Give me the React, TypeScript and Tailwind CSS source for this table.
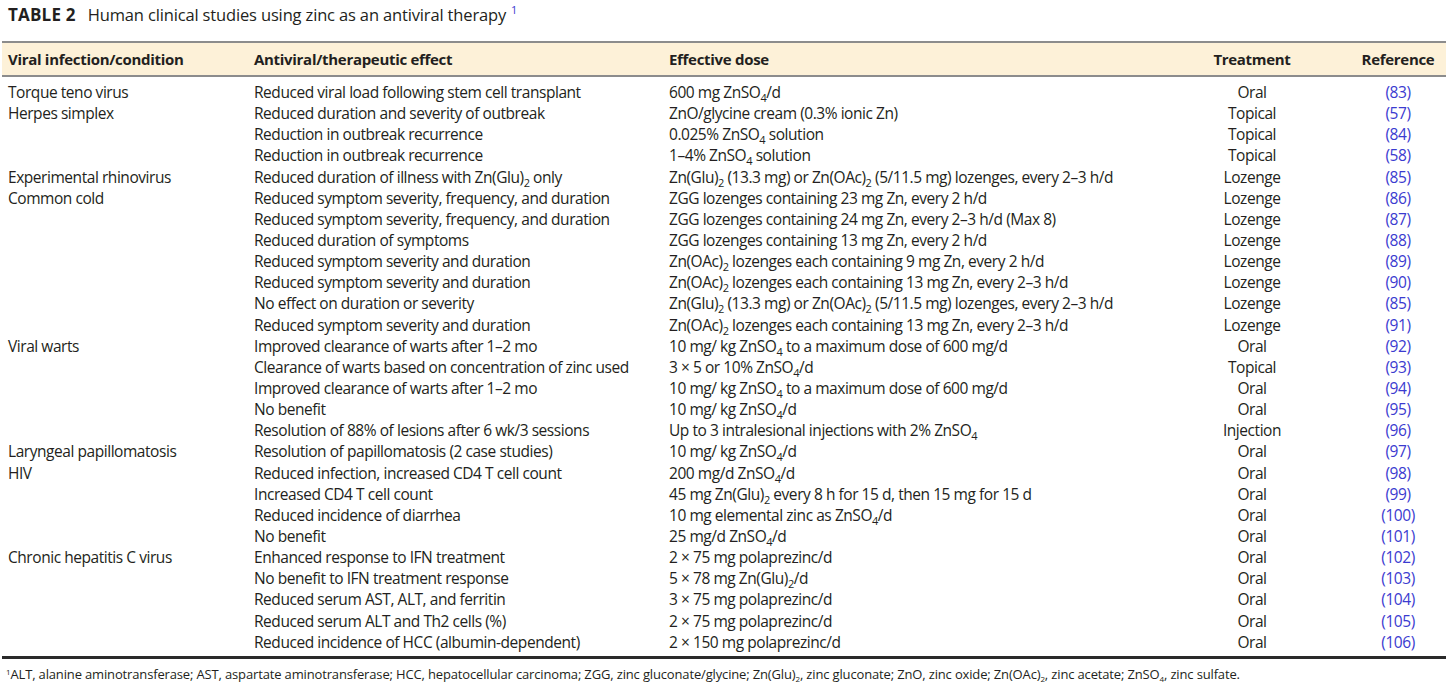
import React from "react";

type Row = { cond?: string; effect: React.ReactNode; dose: React.ReactNode; tx: string; ref: number };

const Sub = ({ children }: { children: React.ReactNode }) => (
  <span className="text-[11px] relative top-[4px] leading-none">{children}</span>
);

const ZnSO4 = () => (
  <>
    ZnSO<Sub>4</Sub>
  </>
);

const rows: Row[] = [
  { cond: "Torque teno virus", effect: "Reduced viral load following stem cell transplant", dose: <>600 mg <ZnSO4 />/d</>, tx: "Oral", ref: 83 },
  { cond: "Herpes simplex", effect: "Reduced duration and severity of outbreak", dose: "ZnO/glycine cream (0.3% ionic Zn)", tx: "Topical", ref: 57 },
  { effect: "Reduction in outbreak recurrence", dose: <>0.025% <ZnSO4 /> solution</>, tx: "Topical", ref: 84 },
  { effect: "Reduction in outbreak recurrence", dose: <>1–4% <ZnSO4 /> solution</>, tx: "Topical", ref: 58 },
  { cond: "Experimental rhinovirus", effect: <>Reduced duration of illness with Zn(Glu)<Sub>2</Sub> only</>, dose: <>Zn(Glu)<Sub>2</Sub> (13.3 mg) or Zn(OAc)<Sub>2</Sub> (5/11.5 mg) lozenges, every 2–3 h/d</>, tx: "Lozenge", ref: 85 },
  { cond: "Common cold", effect: "Reduced symptom severity, frequency, and duration", dose: "ZGG lozenges containing 23 mg Zn, every 2 h/d", tx: "Lozenge", ref: 86 },
  { effect: "Reduced symptom severity, frequency, and duration", dose: "ZGG lozenges containing 24 mg Zn, every 2–3 h/d (Max 8)", tx: "Lozenge", ref: 87 },
  { effect: "Reduced duration of symptoms", dose: "ZGG lozenges containing 13 mg Zn, every 2 h/d", tx: "Lozenge", ref: 88 },
  { effect: "Reduced symptom severity and duration", dose: <>Zn(OAc)<Sub>2</Sub> lozenges each containing 9 mg Zn, every 2 h/d</>, tx: "Lozenge", ref: 89 },
  { effect: "Reduced symptom severity and duration", dose: <>Zn(OAc)<Sub>2</Sub> lozenges each containing 13 mg Zn, every 2–3 h/d</>, tx: "Lozenge", ref: 90 },
  { effect: "No effect on duration or severity", dose: <>Zn(Glu)<Sub>2</Sub> (13.3 mg) or Zn(OAc)<Sub>2</Sub> (5/11.5 mg) lozenges, every 2–3 h/d</>, tx: "Lozenge", ref: 85 },
  { effect: "Reduced symptom severity and duration", dose: <>Zn(OAc)<Sub>2</Sub> lozenges each containing 13 mg Zn, every 2–3 h/d</>, tx: "Lozenge", ref: 91 },
  { cond: "Viral warts", effect: "Improved clearance of warts after 1–2 mo", dose: <>10 mg/ kg <ZnSO4 /> to a maximum dose of 600 mg/d</>, tx: "Oral", ref: 92 },
  { effect: "Clearance of warts based on concentration of zinc used", dose: <>3 × 5 or 10% <ZnSO4 />/d</>, tx: "Topical", ref: 93 },
  { effect: "Improved clearance of warts after 1–2 mo", dose: <>10 mg/ kg <ZnSO4 /> to a maximum dose of 600 mg/d</>, tx: "Oral", ref: 94 },
  { effect: "No benefit", dose: <>10 mg/ kg <ZnSO4 />/d</>, tx: "Oral", ref: 95 },
  { effect: "Resolution of 88% of lesions after 6 wk/3 sessions", dose: <>Up to 3 intralesional injections with 2% <ZnSO4 /></>, tx: "Injection", ref: 96 },
  { cond: "Laryngeal papillomatosis", effect: "Resolution of papillomatosis (2 case studies)", dose: <>10 mg/ kg <ZnSO4 />/d</>, tx: "Oral", ref: 97 },
  { cond: "HIV", effect: "Reduced infection, increased CD4 T cell count", dose: <>200 mg/d <ZnSO4 />/d</>, tx: "Oral", ref: 98 },
  { effect: "Increased CD4 T cell count", dose: <>45 mg Zn(Glu)<Sub>2</Sub> every 8 h for 15 d, then 15 mg for 15 d</>, tx: "Oral", ref: 99 },
  { effect: "Reduced incidence of diarrhea", dose: <>10 mg elemental zinc as <ZnSO4 />/d</>, tx: "Oral", ref: 100 },
  { effect: "No benefit", dose: <>25 mg/d <ZnSO4 />/d</>, tx: "Oral", ref: 101 },
  { cond: "Chronic hepatitis C virus", effect: "Enhanced response to IFN treatment", dose: "2 × 75 mg polaprezinc/d", tx: "Oral", ref: 102 },
  { effect: "No benefit to IFN treatment response", dose: <>5 × 78 mg Zn(Glu)<Sub>2</Sub>/d</>, tx: "Oral", ref: 103 },
  { effect: "Reduced serum AST, ALT, and ferritin", dose: "3 × 75 mg polaprezinc/d", tx: "Oral", ref: 104 },
  { effect: "Reduced serum ALT and Th2 cells (%)", dose: "2 × 75 mg polaprezinc/d", tx: "Oral", ref: 105 },
  { effect: "Reduced incidence of HCC (albumin-dependent)", dose: "2 × 150 mg polaprezinc/d", tx: "Oral", ref: 106 },
];

const grid = "grid grid-cols-[252px_415px_531px_104px_142px]";

const FootSub = ({ children }: { children: React.ReactNode }) => (
  <span className="text-[8px] relative top-[3px]">{children}</span>
);

export default function App() {
  return (
    <div
      className="w-[1456px] h-[689px] bg-white text-[#231f20] overflow-hidden"
      style={{ fontFamily: '"Open Sans", "Noto Sans", sans-serif' }}
    >
      {/* Caption */}
      <div className="pl-[8px] pt-[3px] h-[41px] leading-[24px]">
        <span className="font-bold text-[17px] tracking-[0.2px]">TABLE 2</span>
        <span className="ml-[12px] text-[16.5px] tracking-[-0.15px]">Human clinical studies using zinc as an antiviral therapy</span>
        <span className="text-[11px] text-[#3b3bd0] relative -top-[7px] ml-[5px]">1</span>
      </div>

      <div className="ml-[2px] w-[1444px] text-[15.5px] tracking-[-0.45px]">
        {/* Header */}
        <div className={`${grid} h-[36px] items-center bg-[#fdf1d8] border-t-2 border-b-2 border-[#8c8c8c] font-bold tracking-[-0.3px] text-[15px]`}>
          <div className="pl-[6px]">Viral infection/condition</div>
          <div>Antiviral/therapeutic effect</div>
          <div>Effective dose</div>
          <div className="text-center">Treatment</div>
          <div className="text-center pl-[46px]">Reference</div>
        </div>

        {/* Body */}
        <div className="pt-[5px] pb-[3px] border-b-[3px] border-[#2a2a2a]">
          {rows.map((r, i) => (
            <div key={i} className={`${grid} h-[21.15px] leading-[21px] whitespace-nowrap`}>
              <div className="pl-[6px]">{r.cond}</div>
              <div>{r.effect}</div>
              <div>{r.dose}</div>
              <div className="text-center">{r.tx}</div>
              <div className="text-center pl-[46px] text-[#3b3bd0]">({r.ref})</div>
            </div>
          ))}
        </div>

        {/* Footnote */}
        <div className="pl-[4px] pt-[7px] text-[13px] leading-[16px] tracking-[-0.15px] whitespace-nowrap">
          <span className="text-[8px] relative -top-[4px]">1</span>
          ALT, alanine aminotransferase; AST, aspartate aminotransferase; HCC, hepatocellular carcinoma; ZGG, zinc
          gluconate/glycine; Zn(Glu)<FootSub>2</FootSub>, zinc gluconate; ZnO, zinc oxide; Zn(OAc)
          <FootSub>2</FootSub>, zinc acetate; ZnSO<FootSub>4</FootSub>, zinc sulfate.
        </div>
      </div>
    </div>
  );
}
